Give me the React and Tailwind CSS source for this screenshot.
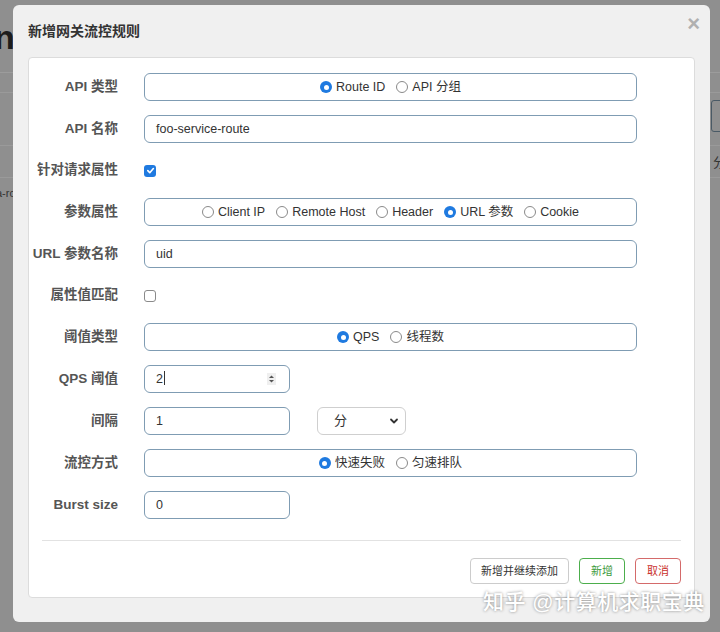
import React from 'react'

const cjk = { fontFamily: '"Liberation Sans", "Noto Sans CJK SC", sans-serif' }

const Radio = ({ checked }) =>
  checked ? (
    <span className="inline-flex h-[12px] w-[12px] shrink-0 items-center justify-center rounded-full bg-[#1f7ae0]">
      <span className="h-[5px] w-[5px] rounded-full bg-white" />
    </span>
  ) : (
    <span className="inline-block h-[12px] w-[12px] shrink-0 rounded-full border border-[#8a8a8a] bg-white" />
  )

const RadioGroup = ({ options }) => (
  <div className="flex h-[28px] w-[493px] items-center justify-center gap-[11px] rounded-[6px] border border-[#7f9cb3] bg-white text-[12.5px] text-[#333]">
    {options.map((o) => (
      <label key={o.label} className="flex items-center gap-[4px]">
        <Radio checked={o.checked} />
        <span>{o.label}</span>
      </label>
    ))}
  </div>
)

const TextInput = ({ value, width = 'w-[493px]', children }) => (
  <div className={`flex h-[28px] ${width} items-center justify-between rounded-[6px] border border-[#7f9cb3] bg-white pl-[11px] pr-[12px] text-[12.5px] text-[#333]`}>
    <span>{value}</span>
    {children}
  </div>
)

const Checkbox = ({ checked }) =>
  checked ? (
    <span className="flex h-[12px] w-[12px] items-center justify-center rounded-[3px] bg-[#1f7ae0]">
      <svg width="9" height="9" viewBox="0 0 10 10">
        <path d="M2 5.2 L4.2 7.4 L8.2 2.8" fill="none" stroke="white" strokeWidth="1.8" strokeLinecap="round" strokeLinejoin="round" />
      </svg>
    </span>
  ) : (
    <span className="block h-[12px] w-[12px] rounded-[3px] border border-[#8a8a8a] bg-white" />
  )

const Row = ({ label, h = 'h-[28px]', children }) => (
  <div className={`flex ${h} items-center`}>
    <div className="w-[89px] whitespace-nowrap text-right text-[13.5px] font-bold text-[#555]">{label}</div>
    <div className="ml-[26px] flex items-center">{children}</div>
  </div>
)

export default function App() {
  return (
    <div className="relative h-[632px] w-[720px] overflow-hidden bg-[#8f8f8f]" style={cjk}>
      {/* page behind the overlay */}
      <div className="absolute left-[-6px] top-[20px] text-[34px] font-bold leading-none text-[#1c1c1c]">n</div>
      <div className="absolute left-0 top-[72px] h-px w-[720px] bg-[#9c9c9c]" />
      <div className="absolute left-0 top-[92px] h-px w-[720px] bg-[#9a9a9a]" />
      <div className="absolute left-0 top-[145px] h-px w-[720px] bg-[#9a9a9a]" />
      <div className="absolute left-0 top-[177px] h-px w-[720px] bg-[#9a9a9a]" />
      <div className="absolute left-[-4px] top-[185px] text-[11px] text-[#333]">a-ro</div>
      <div className="absolute left-[711px] top-[100px] h-[32px] w-[20px] rounded-[3px] border border-[#4a5a66] bg-[#8f8f8f]" />
      <div className="absolute left-[713px] top-[153px] text-[13px] text-[#333]">分</div>

      {/* modal */}
      <div className="absolute left-[13px] top-[5px] flex h-[617px] w-[697px] flex-col rounded-[6px] bg-[#f0f0f0] px-[15px] pb-[24px]">
        <div className="flex h-[52px] items-center justify-between">
          <div className="text-[14px] font-semibold text-[#333]">新增网关流控规则</div>
          <div className="mr-[-5px] mt-[-14px] text-[22px] font-bold leading-none text-[#b0b0b0]">×</div>
        </div>

        <div className="flex flex-1 flex-col rounded-[4px] border border-[#dcdcdc] bg-white pt-[15px]">
          <div className="flex flex-col gap-[14px]">
            <Row label="API 类型">
              <RadioGroup options={[{ label: 'Route ID', checked: true }, { label: 'API 分组' }]} />
            </Row>
            <Row label="API 名称">
              <TextInput value="foo-service-route" />
            </Row>
            <Row label="针对请求属性" h="h-[27px]">
              <Checkbox checked />
            </Row>
            <Row label="参数属性">
              <RadioGroup
                options={[
                  { label: 'Client IP' },
                  { label: 'Remote Host' },
                  { label: 'Header' },
                  { label: 'URL 参数', checked: true },
                  { label: 'Cookie' },
                ]}
              />
            </Row>
            <Row label="URL 参数名称">
              <TextInput value="uid" />
            </Row>
            <Row label="属性值匹配" h="h-[27px]">
              <Checkbox />
            </Row>
            <Row label="阈值类型">
              <RadioGroup options={[{ label: 'QPS', checked: true }, { label: '线程数' }]} />
            </Row>
            <Row label="QPS 阈值">
              <TextInput value={<span>2<span className="ml-px inline-block h-[14px] w-px translate-y-[2px] bg-[#333]" /></span>} width="w-[146px]">
                <svg width="9" height="12" viewBox="0 0 9 12" className="mr-[1px]">
                  <rect x="0" y="0" width="9" height="12" fill="#efefef" />
                  <path d="M2 5 L4.5 2.5 L7 5 Z" fill="#555" />
                  <path d="M2 7 L4.5 9.5 L7 7 Z" fill="#555" />
                </svg>
              </TextInput>
            </Row>
            <Row label="间隔">
              <TextInput value="1" width="w-[146px]" />
              <div className="ml-[27px] flex h-[28px] w-[89px] items-center justify-between rounded-[6px] border border-[#cfcfcf] bg-white pl-[16px] pr-[6px] text-[13px] text-[#333]">
                <span>分</span>
                <svg width="10" height="10" viewBox="0 0 10 10">
                  <path d="M2 3.5 L5 6.5 L8 3.5" fill="none" stroke="#333" strokeWidth="1.8" strokeLinecap="round" strokeLinejoin="round" />
                </svg>
              </div>
            </Row>
            <Row label="流控方式">
              <RadioGroup options={[{ label: '快速失败', checked: true }, { label: '匀速排队' }]} />
            </Row>
            <Row label="Burst size">
              <TextInput value="0" width="w-[146px]" />
            </Row>
          </div>

          <div className="mx-[13px] mt-[21px] h-px bg-[#e2e2e2]" />

          <div className="mr-[13px] mt-[17px] flex justify-end gap-[10px] text-[11px]">
            <div className="flex h-[26px] items-center rounded-[4px] border border-[#cccccc] px-[10px] text-[#333]">新增并继续添加</div>
            <div className="flex h-[26px] items-center rounded-[4px] border border-[#4cae4c] px-[11px] text-[#3c9a3c]">新增</div>
            <div className="flex h-[26px] items-center rounded-[4px] border border-[#d46a6a] px-[11px] text-[#c9302c]">取消</div>
          </div>
        </div>
      </div>

      {/* watermark */}
      <div className="absolute left-[483px] top-[591px] text-[21px] font-medium leading-none tracking-[0.5px] text-white [text-shadow:0_0_3px_rgba(0,0,0,0.45)]">
        知乎 @计算机求职宝典
      </div>
    </div>
  )
}
